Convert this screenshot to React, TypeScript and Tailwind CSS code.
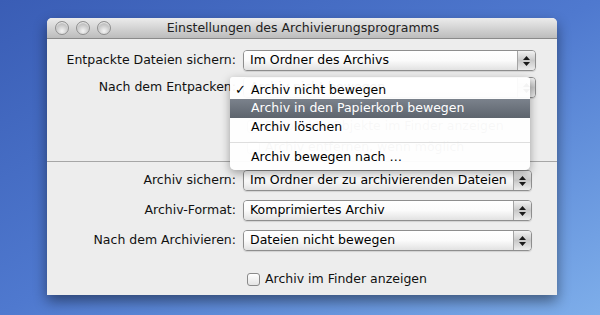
import React from "react";

const font = { fontFamily: '"DejaVu Sans", "Liberation Sans", sans-serif' };

function PopUp({ value, width = "w-[293px]" }: { value: string; width?: string }) {
  return (
    <div
      className={`${width} h-[21px] flex rounded-[4px] border border-[#8e8e8e] overflow-hidden shadow-[0_1px_1px_rgba(0,0,0,0.12)]`}
    >
      <div className="flex-1 flex items-center pl-[6px] text-[12.5px] text-black bg-linear-to-b from-white via-[#fbfbfb] to-[#e2e2e2]">
        {value}
      </div>
      <div className="w-[18px] flex flex-col items-center justify-center gap-[2px] border-l border-[#a4a4a4] bg-linear-to-b from-[#f2f2f2] via-[#c9c9c9] to-[#ececec]">
        <svg width="7" height="4" viewBox="0 0 7 4">
          <path d="M3.5 0 L7 4 L0 4 Z" fill="#1a1a1a" />
        </svg>
        <svg width="7" height="4" viewBox="0 0 7 4">
          <path d="M0 0 L7 0 L3.5 4 Z" fill="#1a1a1a" />
        </svg>
      </div>
    </div>
  );
}

function Row({ label, children }: { label: string; children: React.ReactNode }) {
  return (
    <div className="flex items-center h-[21px]">
      <div className="w-[189px] text-right text-[12.5px] text-[#111] whitespace-nowrap">{label}</div>
      <div className="ml-[7px]">{children}</div>
    </div>
  );
}

function Checkbox({ label }: { label: string }) {
  return (
    <div className="flex items-center h-[14px] pl-[200px]">
      <div className="w-[13px] h-[13px] rounded-[3px] border border-[#8a8a8a] bg-linear-to-b from-white to-[#e4e4e4]" />
      <span className="ml-[5px] text-[12.5px] text-[#111] whitespace-nowrap">{label}</span>
    </div>
  );
}

function Light() {
  return (
    <div className="w-[14px] h-[14px] rounded-full border border-[#8f8f8f] bg-[radial-gradient(circle_at_50%_75%,#f4f4f4,#c4c4c4_60%,#a9a9a9)] shadow-[inset_0_1px_1px_rgba(255,255,255,0.8)]" />
  );
}

export default function App() {
  return (
    <div
      style={font}
      className="w-[600px] h-[315px] overflow-hidden pl-[47px] pt-[18px] bg-linear-to-br from-[#3a5db5] via-[#4f79cf] to-[#7eaeea]"
    >
      <div className="relative w-[510px] h-[277px] flex flex-col bg-[#ededed] rounded-t-[5px] shadow-[0_6px_14px_rgba(0,0,0,0.45)]">
        {/* title bar */}
        <div className="h-[21px] flex items-center rounded-t-[5px] border-b border-[#8a8a8a] bg-linear-to-b from-[#ececec] to-[#bcbcbc]">
          <div className="flex gap-[7px] pl-[8px]">
            <Light />
            <Light />
            <Light />
          </div>
          <div className="flex-1 text-center text-[12.5px] text-[#222] pr-[62px] whitespace-nowrap">
            Einstellungen des Archivierungsprogramms
          </div>
        </div>

        {/* unpack section */}
        <div className="flex flex-col pt-[11px]">
          <Row label="Entpackte Dateien sichern:">
            <PopUp value="Im Ordner des Archivs" />
          </Row>
          <div className="mt-[6px]">
            <Row label="Nach dem Entpacken:">
              <PopUp value="Archiv nicht bewegen" />
            </Row>
          </div>
          <div className="mt-[21px] opacity-60">
            <Checkbox label="Entpackte Objekte im Finder anzeigen" />
          </div>
          <div className="mt-[7px] opacity-60">
            <Checkbox label="Archiv entfernen, wenn möglich" />
          </div>
        </div>

        <div className="mt-[7px] h-[1px] bg-[#a6a6a6]" />

        {/* archive section */}
        <div className="flex flex-col pt-[8px]">
          <Row label="Archiv sichern:">
            <PopUp value="Im Ordner der zu archivierenden Dateien" width="w-[289px]" />
          </Row>
          <div className="mt-[9px]">
            <Row label="Archiv-Format:">
              <PopUp value="Komprimiertes Archiv" width="w-[289px]" />
            </Row>
          </div>
          <div className="mt-[9px]">
            <Row label="Nach dem Archivieren:">
              <PopUp value="Dateien nicht bewegen" width="w-[289px]" />
            </Row>
          </div>
          <div className="mt-[21px]">
            <Checkbox label="Archiv im Finder anzeigen" />
          </div>
        </div>

        {/* open pop-up menu */}
        <div className="absolute left-[183px] top-[59px] w-[300px] flex flex-col pt-[4px] pb-[4px] bg-white/95 rounded-t-[3px] rounded-b-[5px] shadow-[0_3px_10px_rgba(0,0,0,0.35)] text-[12.5px] text-black">
          <div className="h-[18px] flex items-center">
            <span className="w-[21px] pl-[5px] text-[13px]">✓</span>
            <span>Archiv nicht bewegen</span>
          </div>
          <div className="h-[19px] flex items-center pl-[21px] text-white bg-linear-to-b from-[#7b828c] to-[#5d646d]">
            Archiv in den Papierkorb bewegen
          </div>
          <div className="h-[18px] flex items-center pl-[21px]">Archiv löschen</div>
          <div className="h-[12px] flex items-center">
            <div className="w-full h-[1px] bg-[#dedede]" />
          </div>
          <div className="h-[18px] flex items-center pl-[21px]">Archiv bewegen nach …</div>
        </div>
      </div>
    </div>
  );
}
